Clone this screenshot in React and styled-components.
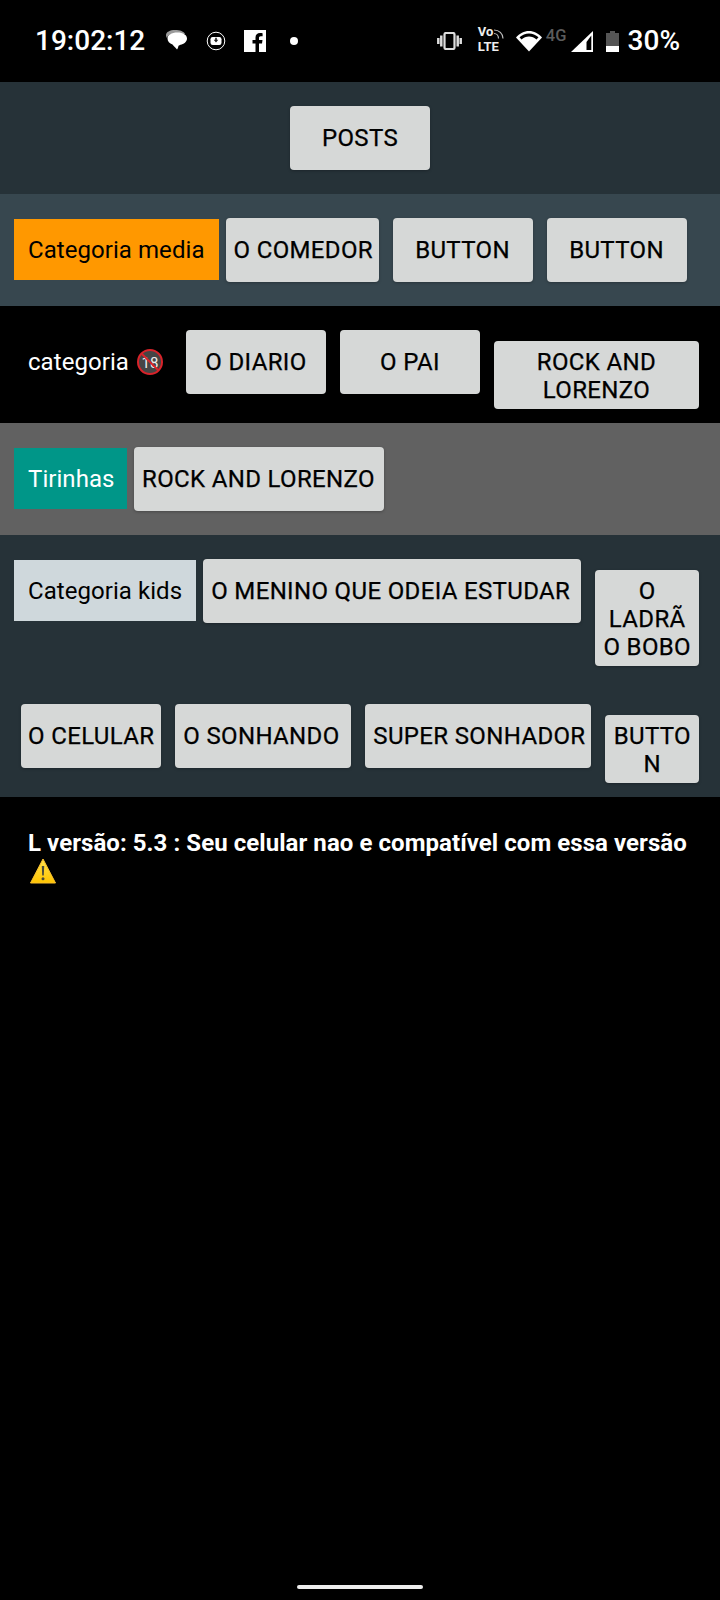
import React from "react";
import styled, { createGlobalStyle } from "styled-components";

const Global = createGlobalStyle`
  html, body { margin: 0; padding: 0; background: #000; }
  * { box-sizing: border-box; }
`;

const Page = styled.div`
  width: 720px;
  height: 1600px;
  display: flex;
  flex-direction: column;
  background: #000;
  font-family: Roboto, "Liberation Sans", sans-serif;
  letter-spacing: 0.06px;
  overflow: hidden;
`;

const StatusBar = styled.div`
  height: 82px;
  flex-shrink: 0;
  display: flex;
  justify-content: space-between;
  align-items: center;
  padding: 0 40px 0 35px;
  color: #fff;
`;

const StatusGroup = styled.div`
  display: flex;
  align-items: center;
`;

const Clock = styled.span`
  font-size: 28px;
  line-height: 32px;
  font-weight: 500;
  width: 109px;
  margin-right: 22px;
  white-space: nowrap;
  letter-spacing: 0;
`;

const Percent = styled.span`
  font-size: 28px;
  line-height: 32px;
  font-weight: 500;
  margin-left: 9px;
  letter-spacing: 0;
`;

const Glyph = styled.svg`
  display: block;
  flex-shrink: 0;
  margin-left: ${(p) => p.$ml || 0}px;
`;

const VolteBox = styled.div`
  width: 26px;
  height: 26px;
  margin-left: 16px;
  position: relative;
  font-weight: 700;
  color: #eee;
`;

const VolteVo = styled.span`
  position: absolute;
  left: 0;
  top: -3px;
  font-size: 13px;
  line-height: 14px;
`;

const VolteLte = styled.span`
  position: absolute;
  left: 0;
  top: 12px;
  font-size: 13px;
  line-height: 14px;
`;

const VolteArcs = styled.svg`
  position: absolute;
  right: 0;
  top: 1px;
`;

const FourG = styled.span`
  font-size: 16.5px;
  line-height: 16px;
  font-weight: 500;
  color: #5c5c5c;
  margin: 0 4px 10px 4px;
`;

const Section = styled.div`
  background: ${(p) => p.$bg};
`;

const Row = styled.div`
  display: flex;
  align-items: baseline;
  justify-content: ${(p) => (p.$center ? "center" : "flex-start")};
  min-height: 112px;
  padding: 24px 14px 14px;
`;

const Label = styled.div`
  flex-shrink: 0;
  width: ${(p) => (p.$w ? p.$w + "px" : "auto")};
  padding: 17px 14px 16px;
  font-size: 24px;
  line-height: 28px;
  white-space: nowrap;
  background: ${(p) => p.$bg || "transparent"};
  color: ${(p) => p.$color || "#000"};
`;

// $w: largura fixa (texto quebra), $fit: largura fixa numa linha, texto a esquerda
const Button = styled.button`
  flex-shrink: 0;
  min-width: ${(p) => (p.$w ? 0 : 140)}px;
  min-height: 64px;
  width: ${(p) => (p.$w || p.$fit ? (p.$w || p.$fit) + "px" : "auto")};
  margin: 0 7px;
  padding: ${(p) => (p.$w ? "7px 7px 5px" : p.$fit ? "6px 0 6px 8px" : "6px 7px")};
  border: 0;
  border-radius: 4px;
  background: #d6d8d7;
  box-shadow: 0 1px 3px rgba(0, 0, 0, 0.25);
  color: #000;
  font-family: inherit;
  font-size: 24px;
  line-height: 28px;
  font-weight: 400;
  -webkit-text-stroke: 0.25px #000;
  letter-spacing: 0.35px;
  text-align: ${(p) => (p.$fit ? "left" : "center")};
  overflow-wrap: anywhere;
  white-space: ${(p) => (p.$w ? "normal" : "nowrap")};
`;

const Notice = styled.p`
  margin: 32px 0 0;
  padding: 0 28px;
  color: #fff;
  font-size: 24px;
  line-height: 28px;
  font-weight: 700;
`;

const Emoji = styled.svg`
  display: inline-block;
  vertical-align: ${(p) => p.$va}px;
`;

const HomeBar = styled.div`
  width: 126px;
  height: 4px;
  margin: auto auto 11px;
  border-radius: 2px;
  background: #eee;
`;

const ChatIcon = () => (
  <Glyph width="22" height="22" viewBox="0 0 22 22">
    <path d="M9 0c5 0 9 1.500 10 4H7C4 4 1.500 5.500 1 8 .2 7.200 0 6 0 5c0-3 4-5 9-5z" fill="#9a9a9a" />
    <path d="M11.500 2.500c5.500 0 9.500 2.500 9.500 6 0 3.300-3.300 5.700-6.500 6.200l-2 1.100c-.5 2.200-1 3.200-1.500 3.700-.8-.8-3-3.300-4.500-5C3.500 13.500 1.500 11.200 1.500 8.500c0-3.500 4-6 10-6z" fill="#fff" />
  </Glyph>
);

const DownloadIcon = () => (
  <Glyph $ml={18} width="20" height="20" viewBox="0 0 20 20">
    <circle cx="10" cy="10" r="8.800" fill="none" stroke="#fff" strokeWidth="1" />
    <rect x="4.500" y="6" width="11" height="8" rx="2.200" fill="#fff" />
    <path d="M9.200 6.800h1.600v2h1.500L10 11.500 7.700 8.800h1.500z" fill="#222" />
  </Glyph>
);

const FacebookIcon = () => (
  <Glyph $ml={18} width="22" height="22" viewBox="0 0 22 22">
    <rect width="22" height="22" fill="#fff" />
    <path d="M15 22v-8.500h3l.500-3.500H15V8c0-1 .400-1.700 1.800-1.700h1.800V3.200C18.200 3.100 17.200 3 16 3c-2.700 0-4.500 1.600-4.500 4.600V10h-3v3.500h3V22z" fill="#000" />
  </Glyph>
);

const DotIcon = () => (
  <Glyph $ml={24} width="8" height="8" viewBox="0 0 8 8">
    <circle cx="4" cy="4" r="4" fill="#fff" />
  </Glyph>
);

const VibrateIcon = () => (
  <Glyph width="25" height="18" viewBox="0 0 25 18">
    <rect x="7.500" y="1" width="10" height="16" rx="1.500" fill="none" stroke="#ddd" strokeWidth="2.200" />
    <path d="M4.300 3.500v11M1.300 6v6M20.700 3.500v11M23.700 6v6" stroke="#ddd" strokeWidth="2.500" fill="none" />
  </Glyph>
);

const WifiIcon = () => (
  <Glyph $ml={12} width="26" height="22" viewBox="0 0 26 22">
    <path d="M13 21.500 0 7.500C3.500 3.500 8 1 13 1s9.500 2.500 13 6.500z" fill="#fff" />
    <path d="M13 3.500c-3.400 0-6.800 1.300-9.500 3.800l2 2.200C7.600 7.600 10.200 6.600 13 6.600s5.400 1 7.500 2.900l2-2.200C19.800 4.800 16.400 3.500 13 3.500z" fill="#000" />
  </Glyph>
);

const SignalIcon = () => (
  <Glyph width="22" height="21" viewBox="0 0 22 21">
    <path d="M0 21 22 0v21z" fill="#fff" />
    <path d="M15.500 11 20.300 4.500V19h-4.800z" fill="#000" />
  </Glyph>
);

const BatteryIcon = () => (
  <Glyph $ml={13} width="13" height="21" viewBox="0 0 13 21">
    <path d="M4 0h5v2h4v19H0V2h4z" fill="#555" />
    <rect y="15" width="13" height="6" fill="#fff" />
  </Glyph>
);

const NoUnder18 = () => (
  <Emoji $va={-5} width="30" height="26" viewBox="0 0 30 26">
    <circle cx="15" cy="13" r="12" fill="#454545" stroke="#d8232a" strokeWidth="2" />
    <text x="15" y="18.500" textAnchor="middle" fontSize="15" fontFamily="Roboto, sans-serif" fill="#eee">18</text>
    <path d="M6.500 4.500 23.500 21.500" stroke="#d8232a" strokeWidth="2" />
  </Emoji>
);

const WarningSign = () => (
  <Emoji $va={-5} width="30" height="26" viewBox="0 0 30 26">
    <defs>
      <linearGradient id="amarelo" x1="0" y1="0" x2="0" y2="1">
        <stop offset="0" stopColor="#ffe14d" />
        <stop offset="1" stopColor="#ffc400" />
      </linearGradient>
    </defs>
    <path d="M15 1 27.500 25h-25z" fill="url(#amarelo)" stroke="#fbc02d" strokeWidth="1" strokeLinejoin="round" />
    <path d="M13.800 8h2.400l-.4 9.500h-1.600z" fill="#4a4a3a" />
    <circle cx="15" cy="20.800" r="1.500" fill="#4a4a3a" />
  </Emoji>
);

const App = () => {
  return (
    <Page>
      <Global />
      <StatusBar>
        <StatusGroup>
          <Clock>19:02:12</Clock>
          <ChatIcon />
          <DownloadIcon />
          <FacebookIcon />
          <DotIcon />
        </StatusGroup>
        <StatusGroup>
          <VibrateIcon />
          <VolteBox>
            <VolteVo>Vo</VolteVo>
            <VolteLte>LTE</VolteLte>
            <VolteArcs width="11" height="10" viewBox="0 0 11 10">
              <path d="M1 4.500c2.500 0 4.500 2 4.500 5M1 1c5 0 9 3.500 9 8.500" stroke="#bbb" strokeWidth="1.200" fill="none" />
            </VolteArcs>
          </VolteBox>
          <WifiIcon />
          <FourG>4G</FourG>
          <SignalIcon />
          <BatteryIcon />
          <Percent>30%</Percent>
        </StatusGroup>
      </StatusBar>

      <Section $bg="#263238">
        <Row $center>
          <Button>POSTS</Button>
        </Row>
      </Section>

      <Section $bg="#37474f">
        <Row>
          <Label $bg="#ff9800">Categoria media</Label>
          <Button $fit={153}>O COMEDOR</Button>
          <Button>BUTTON</Button>
          <Button>BUTTON</Button>
        </Row>
      </Section>

      <Section $bg="#000">
        <Row>
          <Label $color="#fff">categoria <NoUnder18 /></Label>
          <Button>O DIARIO</Button>
          <Button>O PAI</Button>
          <Button $w={205}>ROCK AND LORENZO</Button>
        </Row>
      </Section>

      <Section $bg="#616161">
        <Row>
          <Label $bg="#009688" $color="#fff" $w={113}>Tirinhas</Label>
          <Button $fit={250}>ROCK AND LORENZO</Button>
        </Row>
      </Section>

      <Section $bg="#263238">
        <Row>
          <Label $bg="#cfd8dc">Categoria kids</Label>
          <Button $fit={378}>O MENINO QUE ODEIA ESTUDAR</Button>
          <Button $w={104}>O LADRÃ O BOBO</Button>
        </Row>
        <Row>
          <Button>O CELULAR</Button>
          <Button $fit={176}>O SONHANDO</Button>
          <Button $fit={226}>SUPER SONHADOR</Button>
          <Button $w={94}>BUTTON</Button>
        </Row>
      </Section>

      <Notice>L versão: 5.3 : Seu celular nao e compatível com essa versão <WarningSign /></Notice>

      <HomeBar />
    </Page>
  );
};

export default App;
